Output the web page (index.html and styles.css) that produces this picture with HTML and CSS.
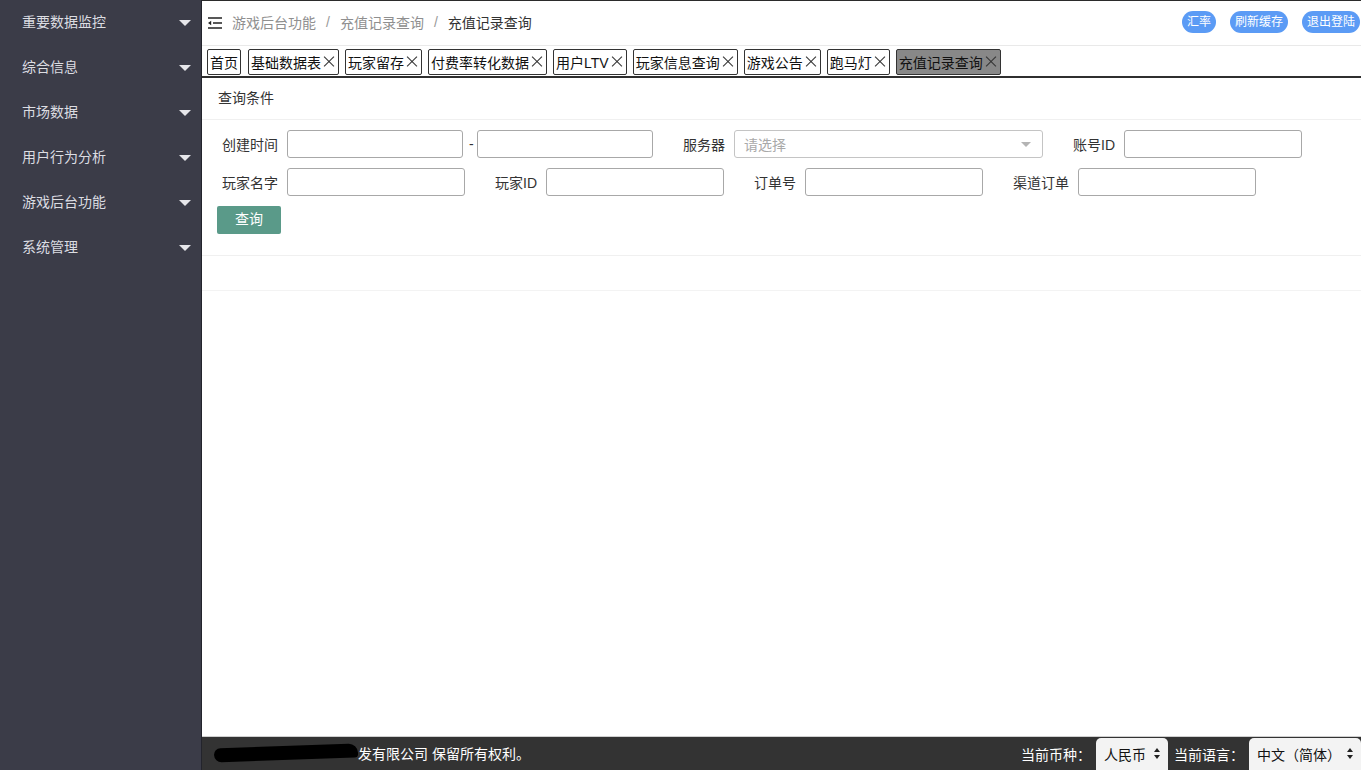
FILE: index.html
```html
<!DOCTYPE html>
<html lang="zh">
<head>
<meta charset="utf-8">
<title>充值记录查询</title>
<link rel="stylesheet" href="styles.css">
</head>
<body>
<aside class="sidebar">
  <div class="menu-item"><span>重要数据监控</span><i class="caret"></i></div>
  <div class="menu-item"><span>综合信息</span><i class="caret"></i></div>
  <div class="menu-item"><span>市场数据</span><i class="caret"></i></div>
  <div class="menu-item"><span>用户行为分析</span><i class="caret"></i></div>
  <div class="menu-item"><span>游戏后台功能</span><i class="caret"></i></div>
  <div class="menu-item"><span>系统管理</span><i class="caret"></i></div>
</aside>
<div class="main">
  <header class="header">
    <div class="crumbs">
      <svg class="fold" width="14" height="12" viewBox="0 0 14 12"><path d="M0 1H14M5 6H14M0 11H14" stroke="#222" stroke-width="1.6" fill="none"/><path d="M0 6L3.2 3.8V8.2Z" fill="#222"/></svg>
      <span class="crumb">游戏后台功能</span><span class="sep">/</span><span class="crumb">充值记录查询</span><span class="sep">/</span><span class="crumb current">充值记录查询</span>
    </div>
    <div class="actions">
      <span class="pill">汇率</span><span class="pill">刷新缓存</span><span class="pill">退出登陆</span>
    </div>
  </header>
  <nav class="tabs">
    <span class="tab first">首页</span>
    <span class="tab">基础数据表<i class="x"></i></span>
    <span class="tab">玩家留存<i class="x"></i></span>
    <span class="tab">付费率转化数据<i class="x"></i></span>
    <span class="tab">用户LTV<i class="x"></i></span>
    <span class="tab">玩家信息查询<i class="x"></i></span>
    <span class="tab">游戏公告<i class="x"></i></span>
    <span class="tab">跑马灯<i class="x"></i></span>
    <span class="tab active">充值记录查询<i class="x"></i></span>
  </nav>
  <section class="content">
    <div class="panel-title">查询条件</div>
    <div class="form">
      <div class="row">
        <label class="lbl">创建时间</label><span class="input w176"></span><span class="dash">-</span><span class="input w176"></span>
        <label class="lbl gap">服务器</label><span class="input select"><span class="ph">请选择</span><i class="tri"></i></span>
        <label class="lbl gap">账号ID</label><span class="input w178"></span>
      </div>
      <div class="row">
        <label class="lbl">玩家名字</label><span class="input w178"></span>
        <label class="lbl gap">玩家ID</label><span class="input w178"></span>
        <label class="lbl gap">订单号</label><span class="input w178"></span>
        <label class="lbl gap">渠道订单</label><span class="input w178"></span>
      </div>
      <div class="btn-row"><span class="btn">查询</span></div>
    </div>
    <div class="table-area"></div>
  </section>
  <footer class="footer">
    <div class="copy"><span class="redact"></span>发有限公司 保留所有权利。</div>
    <div class="prefs">
      <span class="pref-lbl">当前币种：</span>
      <span class="sel cur">人民币<i class="updown"></i></span>
      <span class="pref-lbl">当前语言：</span>
      <span class="sel lang">中文（简体）<i class="updown"></i></span>
    </div>
  </footer>
</div>
</body>
</html>
```

FILE: styles.css
```css
* { box-sizing: border-box; }
html, body { height: 100%; }
body {
  margin: 0;
  display: flex;
  height: 770px;
  overflow: hidden;
  font-family: "Liberation Sans", "Noto Sans CJK SC", sans-serif;
  font-size: 14px;
  color: #333;
  background: #fff;
}
.sidebar {
  width: 202px;
  flex: none;
  background: #3b3c48;
  border-right: 1px solid #23242c;
}
.menu-item {
  height: 45px;
  display: flex;
  align-items: center;
  justify-content: space-between;
  padding: 0 10px 3px 22px;
  color: #dcdde2;
  font-size: 14px;
}
.caret {
  width: 0; height: 0;
  border-left: 6px solid transparent;
  border-right: 6px solid transparent;
  border-top: 6px solid #e6e6ea;
  margin-top: 3px;
}
.main {
  flex: 1;
  display: flex;
  flex-direction: column;
  border-top: 1px solid #2b2b2b;
  min-width: 0;
}
.header {
  height: 45px;
  flex: none;
  display: flex;
  align-items: center;
  justify-content: space-between;
  border-bottom: 1px solid #e9e9e9;
  padding: 0 1px 2px 6px;
}
.crumbs { display: flex; align-items: center; }
.fold { margin: 1px 10px 0 0; }
.crumb { color: #8f8f8f; }
.crumb.current { color: #333; }
.sep { color: #999; margin: 0 10px; }
.actions { display: flex; gap: 14px; }
.pill {
  background: #5b9bf5;
  color: #fff;
  font-size: 12px;
  height: 22px;
  line-height: 22px;
  padding: 0 5px;
  border-radius: 11px;
}
.tabs {
  flex: none;
  display: flex;
  gap: 6px;
  padding: 3px 5px 1px;
  border-bottom: 2px solid #2f2f2f;
}
.tab {
  display: inline-flex;
  align-items: center;
  height: 26px;
  padding: 0 3px 1px 2px;
  border: 1px solid #333;
  border-radius: 2px;
  color: #111;
  font-size: 14px;
  background: #fff;
}
.tab.first { margin-right: 1px; padding-right: 2px; }
.tab.active { background: #888; }
.x {
  position: relative;
  width: 12px; height: 12px;
  margin-left: 2px;
}
.x::before, .x::after {
  content: "";
  position: absolute;
  left: -1px; top: 5.5px;
  width: 14px; height: 1px;
  background: #333;
  transform: rotate(45deg);
}
.x::after { transform: rotate(-45deg); }
.content { flex: 1; }
.panel-title {
  height: 42px;
  line-height: 40px;
  padding-left: 16px;
  border-bottom: 1px solid #f0f0f0;
  color: #333;
}
.form { padding: 10px 15px 21px; border-bottom: 1px solid #f0f0f0; }
.row {
  display: flex;
  align-items: center;
  height: 28px;
  margin-bottom: 10px;
  padding-left: 5px;
}
.lbl { margin-right: 9px; color: #333; }
.lbl.gap { margin-left: 30px; }
.input {
  display: inline-block;
  height: 28px;
  border: 1px solid #a8a8a8;
  border-radius: 3px;
  background: #fff;
}
.w176 { width: 176px; }
.w178 { width: 178px; }
.dash { margin: 0 4px 0 6px; width: 4px; }
.select {
  width: 309px;
  display: inline-flex;
  align-items: center;
  justify-content: space-between;
  padding: 0 11px 0 9px;
  border-color: #c4c4c4;
}
.ph { color: #a9a9a9; }
.tri {
  width: 0; height: 0;
  border-left: 5px solid transparent;
  border-right: 5px solid transparent;
  border-top: 5px solid #b4b4b4;
}
.btn-row { height: 28px; }
.btn {
  display: inline-block;
  width: 64px; height: 28px;
  line-height: 27px;
  text-align: center;
  background: #5a9a89;
  color: #fff;
  border-radius: 2px;
}
.table-area { height: 35px; border-bottom: 1px solid #f3f3f3; }
.footer {
  flex: none;
  height: 34px;
  background: #333;
  border-top: 1px solid #cfcfcf;
  display: flex;
  align-items: center;
  justify-content: space-between;
  color: #fff;
}
.copy { display: flex; align-items: center; padding-left: 12px; padding-bottom: 1px; }
.redact {
  display: inline-block;
  width: 144px; height: 14px;
  background: #000;
  border-radius: 7px 10px 4px 8px;
  transform: rotate(-2deg);
  margin-right: 0;
}
.prefs { display: flex; align-items: stretch; height: 100%; padding-top: 1px; }
.pref-lbl { display: flex; align-items: center; margin-right: 5px; padding-bottom: 1px; }
.sel {
  display: flex;
  align-items: center;
  justify-content: space-between;
  background: #f3f3f3;
  color: #111;
  border-radius: 5px 5px 0 0;
  padding: 0 6px 1px 8px;
  margin-right: 6px;
}
.sel.cur { width: 72px; }
.sel.lang { width: 112px; margin-right: 0; }
.updown {
  position: relative;
  width: 8px; height: 11px;
}
.updown::before, .updown::after {
  content: "";
  position: absolute;
  left: 0;
  border-left: 3.5px solid transparent;
  border-right: 3.5px solid transparent;
}
.updown::before { top: 0; border-bottom: 4.5px solid #222; }
.updown::after { bottom: 0; border-top: 4.5px solid #222; }
```
